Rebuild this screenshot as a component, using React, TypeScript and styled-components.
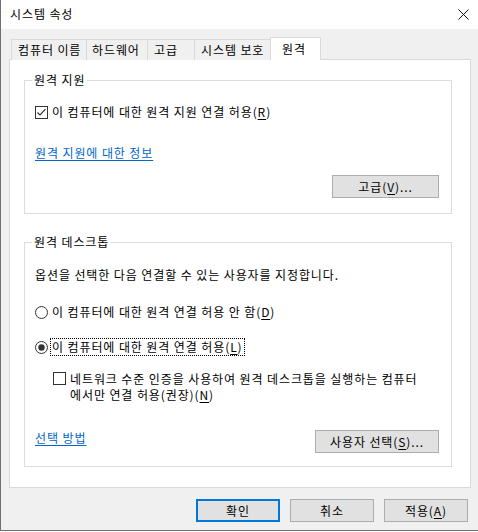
import React from "react";
import styled, { createGlobalStyle, css } from "styled-components";

const GlobalStyle = createGlobalStyle`
  html, body { margin: 0; padding: 0; background: #ffffff; }
  body {
    font-family: "Noto Sans CJK KR", "Noto Sans", sans-serif;
    font-size: 12px;
    letter-spacing: 0.9px;
    color: #000;
  }
  * { box-sizing: border-box; }
`;

const Window = styled.div`
  width: 478px;
  height: 531px;
  background: #f0f0f0;
  border-left: 1px solid #707070;
  border-bottom: 1px solid #707070;
  display: flex;
  flex-direction: column;
`;

const TitleBar = styled.div`
  height: 29px;
  flex: none;
  background: #ffffff;
  display: flex;
  align-items: center;
  justify-content: space-between;
  padding: 0 9px 1px 9px;
  line-height: 16px;
`;

const CloseIcon = styled.svg`
  display: block;
  width: 11px;
  height: 11px;
`;

const Body = styled.div`
  padding: 8px 6px 0 8px;
`;

const TabStrip = styled.div`
  display: flex;
  align-items: flex-end;
  height: 23px;
  padding-left: 3px;
`;

const Tab = styled.div<{ $w: number; $pl: number; $active?: boolean }>`
  width: ${(p) => p.$w}px;
  height: 21px;
  margin-left: -1px;
  padding-left: ${(p) => p.$pl}px;
  border: 1px solid #d9d9d9;
  border-bottom: none;
  background: #f0f0f0;
  line-height: 19px;
  white-space: nowrap;
  overflow: hidden;
  ${(p) =>
    p.$active &&
    css`
      height: 23px;
      margin-left: -2px;
      background: #ffffff;
      line-height: 22px;
      position: relative;
      z-index: 1;
    `}
`;

const Panel = styled.div`
  width: 462px;
  height: 429px;
  margin-top: -1px;
  background: #ffffff;
  border: 1px solid #d9d9d9;
  padding: 20px 0 0 14px;
  display: flex;
  flex-direction: column;
`;

const Group = styled.div<{ $mt: number; $pb: number }>`
  width: 428px;
  border: 1px solid #dcdcdc;
  margin-top: ${(p) => p.$mt}px;
  padding: 0 12px ${(p) => p.$pb}px 10px;
  display: flex;
  flex-direction: column;
  line-height: 16px;
`;

const Legend = styled.div`
  align-self: flex-start;
  margin: -9px 0 0 -3px;
  padding: 0 2px;
  background: #ffffff;
  line-height: 16px;
`;

const Row = styled.div<{ $mt: number; $indent?: number; $top?: boolean }>`
  display: flex;
  align-items: ${(p) => (p.$top ? "flex-start" : "center")};
  gap: 4px;
  margin-top: ${(p) => p.$mt}px;
  margin-left: ${(p) => p.$indent ?? 0}px;
  white-space: nowrap;
`;

const Text = styled.div<{ $mt?: number }>`
  margin-top: ${(p) => p.$mt ?? 0}px;
  white-space: nowrap;
`;

const Focus = styled.span`
  outline: 1px dotted #000;
  padding: 0 1px;
  margin-left: -1px;
`;

const Link = styled.a<{ $mt?: number }>`
  align-self: flex-start;
  margin-top: ${(p) => p.$mt ?? 0}px;
  color: #0066cc;
  text-decoration: underline;
  text-underline-offset: 2px;
  cursor: pointer;
`;

const ButtonRow = styled.div<{ $mt: number; $split?: boolean }>`
  display: flex;
  align-items: center;
  justify-content: ${(p) => (p.$split ? "space-between" : "flex-end")};
  margin-top: ${(p) => p.$mt}px;
`;

const Button = styled.button<{ $w: number; $default?: boolean }>`
  width: ${(p) => p.$w}px;
  height: 23px;
  padding: 0;
  background: #e1e1e1;
  border: 1px solid #adadad;
  border-radius: 0;
  font-family: inherit;
  font-size: 12px;
  letter-spacing: 0.9px;
  color: #000;
  line-height: 16px;
  white-space: nowrap;
  ${(p) =>
    p.$default &&
    css`
      border-color: #0078d7;
      box-shadow: inset 0 0 0 1px #0078d7;
    `}
`;

const Footer = styled.div`
  display: flex;
  justify-content: flex-end;
  gap: 10px;
  padding: 11px 10px 0 0;
`;

const Box = styled.svg<{ $mt?: number }>`
  display: block;
  flex: none;
  width: 13px;
  height: 13px;
  margin-top: ${(p) => p.$mt ?? 0}px;
`;

const U = styled.span`
  text-decoration: underline;
  text-underline-offset: 2px;
`;

function CheckBox({ checked, mt }: { checked?: boolean; mt?: number }) {
  return (
    <Box viewBox="0 0 13 13" $mt={mt}>
      <rect x="0.5" y="0.5" width="12" height="12" fill="#fff" stroke="#333" />
      {checked && (
        <path d="M2.5 6.5 L5 9 L10.5 3.2" fill="none" stroke="#333" strokeWidth="1.2" />
      )}
    </Box>
  );
}

function Radio({ checked }: { checked?: boolean }) {
  return (
    <Box viewBox="0 0 13 13">
      <circle cx="6.5" cy="6.5" r="6" fill="#fff" stroke="#333" />
      {checked && <circle cx="6.5" cy="6.5" r="3.2" fill="#333" />}
    </Box>
  );
}

export default function App() {
  return (
    <>
      <GlobalStyle />
      <Window>
        <TitleBar>
          <span>시스템 속성</span>
          <CloseIcon viewBox="0 0 11 11">
            <path d="M0.5 0.5 L10.5 10.5 M10.5 0.5 L0.5 10.5" stroke="#111" strokeWidth="1" />
          </CloseIcon>
        </TitleBar>
        <Body>
          <TabStrip>
            <Tab $w={76} $pl={6}>컴퓨터 이름</Tab>
            <Tab $w={62} $pl={5}>하드웨어</Tab>
            <Tab $w={48} $pl={6}>고급</Tab>
            <Tab $w={78} $pl={6}>시스템 보호</Tab>
            <Tab $w={51} $pl={11} $active>원격</Tab>
          </TabStrip>
          <Panel>
            <Group $mt={0} $pb={15}>
              <Legend>원격 지원</Legend>
              <Row $mt={16}>
                <CheckBox checked />
                <span>
                  이 컴퓨터에 대한 원격 지원 연결 허용(<U>R</U>)
                </span>
              </Row>
              <Link $mt={25}>원격 지원에 대한 정보</Link>
              <ButtonRow $mt={14}>
                <Button $w={107}>
                  고급(<U>V</U>)...
                </Button>
              </ButtonRow>
            </Group>
            <Group $mt={28} $pb={13}>
              <Legend>원격 데스크톱</Legend>
              <Text $mt={17}>옵션을 선택한 다음 연결할 수 있는 사용자를 지정합니다.</Text>
              <Row $mt={21}>
                <Radio />
                <span>
                  이 컴퓨터에 대한 원격 연결 허용 안 함(<U>D</U>)
                </span>
              </Row>
              <Row $mt={19}>
                <Radio checked />
                <Focus>
                  이 컴퓨터에 대한 원격 연결 허용(<U>L</U>)
                </Focus>
              </Row>
              <Row $mt={16} $indent={18} $top>
                <CheckBox mt={1} />
                <span>
                  네트워크 수준 인증을 사용하여 원격 데스크톱을 실행하는 컴퓨터
                  <br />
                  에서만 연결 허용(권장)(<U>N</U>)
                </span>
              </Row>
              <ButtonRow $mt={27} $split>
                <Link>선택 방법</Link>
                <Button $w={124}>
                  사용자 선택(<U>S</U>)...
                </Button>
              </ButtonRow>
            </Group>
          </Panel>
        </Body>
        <Footer>
          <Button $w={84} $default>확인</Button>
          <Button $w={84}>취소</Button>
          <Button $w={84}>
            적용(<U>A</U>)
          </Button>
        </Footer>
      </Window>
    </>
  );
}
